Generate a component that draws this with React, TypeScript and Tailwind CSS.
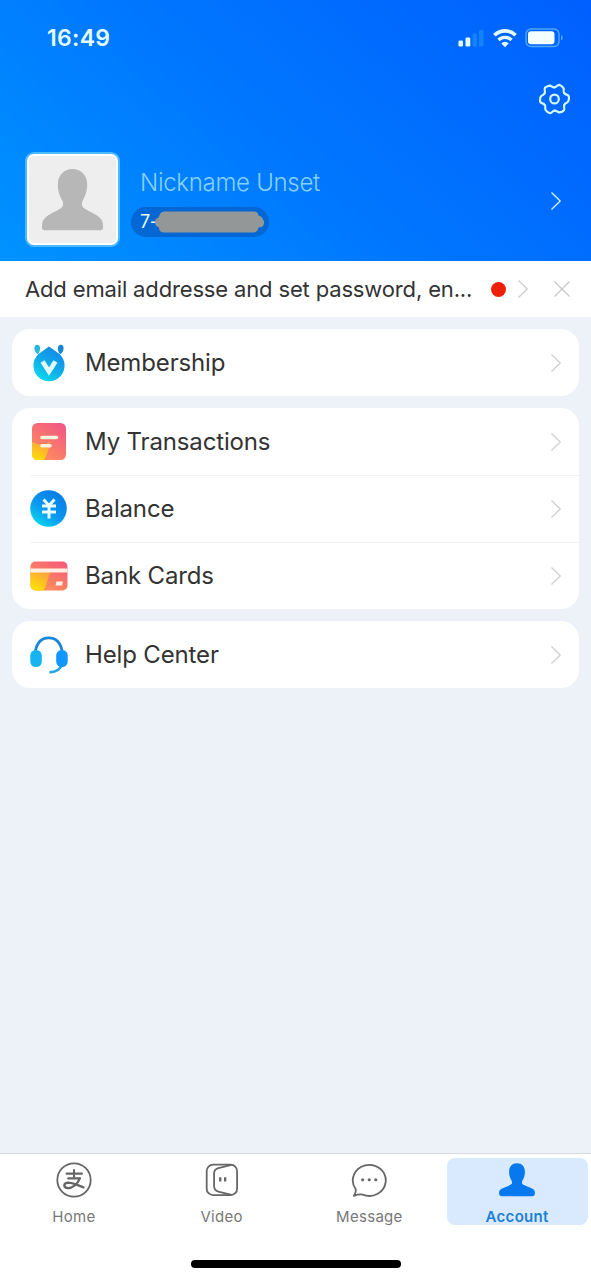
import type { ReactNode } from 'react';

const gearAngles = [0, 60, 120, 180, 240, 300];

function Chevron({ className }: { className?: string }) {
  return (
    <svg width="12" height="20" viewBox="0 0 12 20" fill="none" className={className}>
      <path d="M1.5 1.5 10.2 10 1.5 18.5" stroke="currentColor" strokeWidth="1.3" />
    </svg>
  );
}

function StatusBar() {
  return (
    <div className="flex h-[76px] items-center justify-between pr-[27px] pl-[47px] text-[#e4fbff]">
      <span className="text-[23px] font-semibold tracking-[0.3px]">16:49</span>
      <div className="flex items-center">
        <svg width="27" height="20" viewBox="0 0 27 20" fill="currentColor">
          <rect x="0.5" y="12.5" width="4.5" height="6" rx="1.2" />
          <rect x="7.5" y="9.5" width="4.8" height="9" rx="1.2" />
          <g fill="#1482f8">
            <rect x="14.5" y="5.5" width="4.5" height="13" rx="1.2" />
            <rect x="21" y="2" width="4.5" height="16.5" rx="1.2" />
          </g>
        </svg>
        <svg width="26" height="20" viewBox="0 0 26 20" className="ml-[7px]" fill="none" stroke="currentColor">
          <path d="M2.4 7.2a15.2 15.2 0 0 1 21.2 0" strokeWidth="3.6" />
          <path d="M6.5 12a9.2 9.2 0 0 1 13 0" strokeWidth="3.3" />
          <path d="M13 19.2 9.3 15.5a5 5 0 0 1 7.4 0Z" fill="currentColor" stroke="none" />
        </svg>
        <svg width="39" height="20" viewBox="0 0 39 20" className="ml-[7px]">
          <rect x="1" y="1" width="33" height="17.5" rx="5" fill="none" stroke="#4fa8ff" strokeWidth="1.4" />
          <rect x="3" y="3.2" width="26.5" height="13" rx="3" fill="#f2feff" />
          <path d="M36 7v5.5q1.8-.8 1.8-2.75T36 7Z" fill="#4fa8ff" />
        </svg>
      </div>
    </div>
  );
}

function Gear() {
  return (
    <svg width="31" height="32" viewBox="-1.5 -1.5 33 33" preserveAspectRatio="none" fill="none" stroke="#d5f7ff" strokeWidth="2.3">
      {gearAngles.map((angle) => (
        <path
          key={angle}
          transform={`rotate(${angle} 15 15)`}
          strokeLinecap="round"
          d="M15 2.9C17.4 2.9 17.6 .4 20 .4Q22.400 .9 24.4 3.500C25.800 5.7 23.700 7 25.4 8.95"
        />
      ))}
      <circle cx="15" cy="15" r="4.6" />
    </svg>
  );
}

function Profile() {
  return (
    <div className="flex h-[139px] items-center pt-[16px] pr-[29px] pl-[25px]">
      <div className="h-[95px] w-[95px] rounded-[9px] border-2 border-[#4db9ff] bg-white p-[2px]">
        <svg viewBox="0 0 87 87" className="h-full w-full rounded-[5px] bg-[#eeeeee]">
          <path
            d="M43.5 13c8.8 0 14.7 6.5 14.7 15.500 0 7-2.200 12-4.200 15.500-1.900 3.500-1.500 6.500 1.500 8.500C60 55.500 67 58 70.500 61.500c2.600 2.500 3.500 4.500 3.500 8.500v1.500q0 2.800-2.800 2.800H15.800q-2.800 0-2.800-2.800V70c0-4 .9-6 3.500-8.500C20 58 27 55.500 31.500 52.500c3-2 3.400-5 1.500-8.500-2-3.500-4.200-8.500-4.200-15.500C28.800 19.500 34.700 13 43.500 13Z"
            fill="#b7b7b7"
          />
        </svg>
      </div>
      <div className="ml-[11px] flex flex-1 flex-col items-start pt-1">
        <span className="ml-[9px] text-[24px] leading-[32px] font-light tracking-[-0.3px] text-[#86d1ff]">
          Nickname Unset
        </span>
        <div className="mt-[8px] flex h-[30px] w-[138px] items-center rounded-full bg-[#0467d3] pl-[9px]">
          <span className="text-[18px] tracking-[-0.5px] text-[#e4fbff]">7-</span>
          <svg width="112" height="22" viewBox="0 0 112 22" className="-ml-[3px]">
            <path
              d="M6 3q1-2.500 4-2.500h90q4 0 4.500 4 4 1 4.500 4 2 2.500.5 5.500-1 2.500-5 2.500-1 5-5 5H10q-5 0-5-5Q1.500 15 1 12 .5 8 4.500 6.500Z"
              fill="#939797"
            />
          </svg>
        </div>
      </div>
      <Chevron className="mt-0.5 text-[#d5f7ff]" />
    </div>
  );
}

function Notice() {
  return (
    <div className="flex h-14 items-center bg-white pr-5 pl-[25px] text-[#333]">
      <span className="w-[466px] text-[22px] whitespace-nowrap tracking-[-0.15px]">
        Add email addresse and set password, en...
      </span>
      <span className="h-[15px] w-[15px] shrink-0 rounded-full bg-[#ef2009]" />
      <Chevron className="ml-[11px] shrink-0 text-[#ccc]" />
      <svg width="18" height="18" viewBox="0 0 18 18" stroke="#c8c8c8" strokeWidth="1.3" className="ml-auto shrink-0">
        <path d="M1.5 1.5l15 15M16.5 1.5l-15 15" />
      </svg>
    </div>
  );
}

function MembershipIcon() {
  return (
    <svg width="38" height="40" viewBox="0 0 38 40">
      <defs>
        <linearGradient id="member" x1=".8" y1="0" x2=".25" y2="1">
          <stop offset=".1" stopColor="#128ae9" />
          <stop offset=".6" stopColor="#10b0e9" />
          <stop offset="1" stopColor="#0cdbee" />
        </linearGradient>
      </defs>
      <path d="M7.5 11C3.8 9 3.2 1.8 7 1.8c4.2 0 3.6 6 1.3 9Z" fill="#25b9df" />
      <path d="M30.500 11c3.700-2 4.300-9.200.5-9.200-4.200 0-3.600 6-1.300 9Z" fill="#1286d0" />
      <path d="M19 3.5 29.5 11A15.6 15.6 0 1 1 8.5 11Z" fill="url(#member)" />
      <path d="M12.5 18.5l6.5 10 6.5-10" fill="none" stroke="#e2fbff" strokeWidth="4.6" />
    </svg>
  );
}

function TransactionsIcon() {
  return (
    <svg width="38" height="38" viewBox="0 0 38 38" className="-mt-0.5">
      <defs>
        <linearGradient id="bill" x1="1" y1="0" x2="0.3" y2="1">
          <stop offset="0" stopColor="#f0508a" />
          <stop offset="1" stopColor="#ff8f5c" />
        </linearGradient>
        <linearGradient id="billCorner" x1=".7" y1="0" x2=".2" y2="1">
          <stop offset="0" stopColor="#fb9c48" />
          <stop offset="1" stopColor="#ffe000" />
        </linearGradient>
        <clipPath id="billClip">
          <rect x="2" y="1" width="34" height="37" rx="5.5" />
        </clipPath>
      </defs>
      <g clipPath="url(#billClip)">
        <rect width="38" height="38" fill="url(#bill)" />
        <path d="M0 19q12 7 20 0-1 11-6 19H0Z" fill="url(#billCorner)" />
      </g>
      <path d="M12 15.5h14.5M12 23.8h8" stroke="#fff2df" strokeWidth="3.6" strokeLinecap="round" />
    </svg>
  );
}

function BalanceIcon() {
  return (
    <svg width="38" height="38" viewBox="0 0 38 38">
      <defs>
        <linearGradient id="coin" x1=".8" y1=".1" x2=".2" y2=".95">
          <stop offset="0" stopColor="#087de8" />
          <stop offset=".55" stopColor="#0b98ef" />
          <stop offset="1" stopColor="#08d6ee" />
        </linearGradient>
      </defs>
      <circle cx="18.5" cy="18.5" r="18.3" fill="url(#coin)" />
      <path d="M13.5 9.500l5.500 6 5.500-6M12 16h14M12 22h14M19 15v13.5" fill="none" stroke="#e8fcff" strokeWidth="3" />
    </svg>
  );
}

function BankCardIcon() {
  return (
    <svg width="38" height="30" viewBox="0 0 38 30">
      <defs>
        <linearGradient id="card" x1="1" y1="0" x2=".2" y2="1">
          <stop offset="0" stopColor="#f4547f" />
          <stop offset="1" stopColor="#fd9a52" />
        </linearGradient>
        <linearGradient id="cardCorner" x1=".8" y1="0" x2=".2" y2="1">
          <stop offset="0" stopColor="#f9a142" />
          <stop offset="1" stopColor="#ffe400" />
        </linearGradient>
        <clipPath id="cardClip">
          <rect x=".5" y=".5" width="37" height="29" rx="5" />
        </clipPath>
      </defs>
      <g clipPath="url(#cardClip)">
        <rect width="38" height="30" fill="url(#card)" />
        <path d="M0 11h21q-3 5-4 10t-4 9H0Z" fill="url(#cardCorner)" />
        <path d="M0 7.5h38v4H0Z" fill="#fff0e2" />
      </g>
      <path d="M26.5 20.5h6.5l-1 4h-6.5Z" fill="#fff4e8" />
    </svg>
  );
}

function HelpIcon() {
  return (
    <svg width="38" height="38" viewBox="0 0 38 38">
      <path d="M5 17C6.5 7 11.5 1.9 18.8 1.9S31 7 32.5 17" fill="none" stroke="#1a86d8" strokeWidth="2.8" />
      <path d="M32 28c-1.5 5.500-5.500 8-12.500 8.400" fill="none" stroke="#26a3df" strokeWidth="2.8" />
      <rect x=".3" y="14" width="11.5" height="17" rx="5.5" fill="#16b4f3" />
      <rect x="26.2" y="14" width="11.5" height="17" rx="5.5" fill="#1296ff" />
    </svg>
  );
}

const groups: { label: string; icon: ReactNode }[][] = [
  [{ label: 'Membership', icon: <MembershipIcon /> }],
  [
    { label: 'My Transactions', icon: <TransactionsIcon /> },
    { label: 'Balance', icon: <BalanceIcon /> },
    { label: 'Bank Cards', icon: <BankCardIcon /> },
  ],
  [{ label: 'Help Center', icon: <HelpIcon /> }],
];

const tabs: { label: string; active?: boolean; icon: ReactNode }[] = [
  {
    label: 'Home',
    icon: (
      <svg width="38" height="38" viewBox="0 0 36 36" fill="none" stroke="#666" strokeLinecap="round">
        <circle cx="18" cy="18" r="15.8" strokeWidth="1.7" />
        <path d="M11 12h14.5M18 8.5v8M12.5 16.5h11" strokeWidth="2" />
        <path d="M23.5 16.5C21.5 22 16 26 11.8 25.6 7.5 25 8 20.6 12.5 20.5c5 0 10.5 3.3 14.5 4.5" strokeWidth="2.2" />
      </svg>
    ),
  },
  {
    label: 'Video',
    icon: (
      <svg width="38" height="38" viewBox="0 0 36 36" fill="none" stroke="#666" strokeWidth="1.7">
        <rect x="3.5" y="3.5" width="28.8" height="28.8" rx="6" />
        <path d="M27 3.7 14.5 6.7Q10.5 7.9 10.5 11.5V24q0 3.7 4 5l12.5 3.1" />
        <path d="M16.300 15.500v4M21 15.500v4" strokeWidth="2.2" />
      </svg>
    ),
  },
  {
    label: 'Message',
    icon: (
      <svg width="38" height="38" viewBox="0 0 36 36" fill="none" stroke="#666" strokeWidth="1.7">
        <path d="M5.3 26.5A15.6 14.7 0 1 1 12 31.8q-4-.6-8.3 1.2 2.4-3.5 1.6-6.5Z" strokeLinejoin="round" />
        <g fill="#666" stroke="none">
          <circle cx="12" cy="17.8" r="1.5" />
          <circle cx="18.2" cy="17.8" r="1.5" />
          <circle cx="24.4" cy="17.8" r="1.5" />
        </g>
      </svg>
    ),
  },
  {
    label: 'Account',
    active: true,
    icon: (
      <svg width="38" height="38" viewBox="0 0 36 36" fill="#0878ee">
        <path d="M18 2.200c4.600 0 7.500 3.300 7.500 8 0 3.600-1.100 6.200-2.200 8.100-1 1.900-.8 3.500.8 4.300 2.600 1.400 6 2.100 8.900 4 1.500 1 2 2.200 2 3.800 0 2.200-.9 3-2.900 3H3.900c-2 0-2.900-.8-2.900-3 0-1.600.5-2.800 2-3.800 2.900-1.900 6.300-2.600 8.900-4 1.600-.8 1.800-2.400.8-4.300-1.100-1.900-2.200-4.500-2.200-8.100 0-4.700 2.900-8 7.500-8Z" />
      </svg>
    ),
  },
];

export default function App() {
  return (
    <div className="flex h-[1280px] w-[591px] flex-col bg-[#edf1f8] font-['Inter','Liberation_Sans',sans-serif]">
      <header className="h-[261px] bg-[linear-gradient(42deg,#0093ff_0%,#0077ff_46%,#005fff_100%)]">
        <StatusBar />
        <div className="flex h-[46px] items-center justify-end pr-[21px]">
          <Gear />
        </div>
        <Profile />
      </header>

      <Notice />

      <main className="flex flex-1 flex-col gap-3 px-3 pt-3">
        {groups.map((rows) => (
          <section key={rows[0].label} className="rounded-[18px] bg-white pl-[18px]">
            {rows.map((row, i) => (
              <div
                key={row.label}
                className={`flex h-[67px] items-center pr-[17px] ${i > 0 ? 'border-t border-[#f3f3f3]' : ''}`}
              >
                <span className="flex w-[38px] justify-center">{row.icon}</span>
                <span className="ml-[17px] flex-1 text-[24px] tracking-[-0.15px] text-[#333]">{row.label}</span>
                <Chevron className="text-[#d0d0d0]" />
              </div>
            ))}
          </section>
        ))}
      </main>

      <nav className="h-[127px] border-t border-[#d8d9dc] bg-white">
        <div className="flex pt-1">
          {tabs.map((tab) => (
            <div key={tab.label} className="flex flex-1 justify-center">
              <div
                className={`flex h-[67px] w-[141px] flex-col items-center rounded-lg pt-[3px] ${
                  tab.active ? 'bg-[#d9eafe] font-semibold text-[#1c80d5]' : 'text-[#777]'
                }`}
              >
                <span className="shrink-0">{tab.icon}</span>
                <span className="mt-[10px] text-[15px] leading-[16px] tracking-[0.3px]">{tab.label}</span>
              </div>
            </div>
          ))}
        </div>
        <div className="mx-auto mt-[35px] h-2 w-[210px] rounded-full bg-black" />
      </nav>
    </div>
  );
}
